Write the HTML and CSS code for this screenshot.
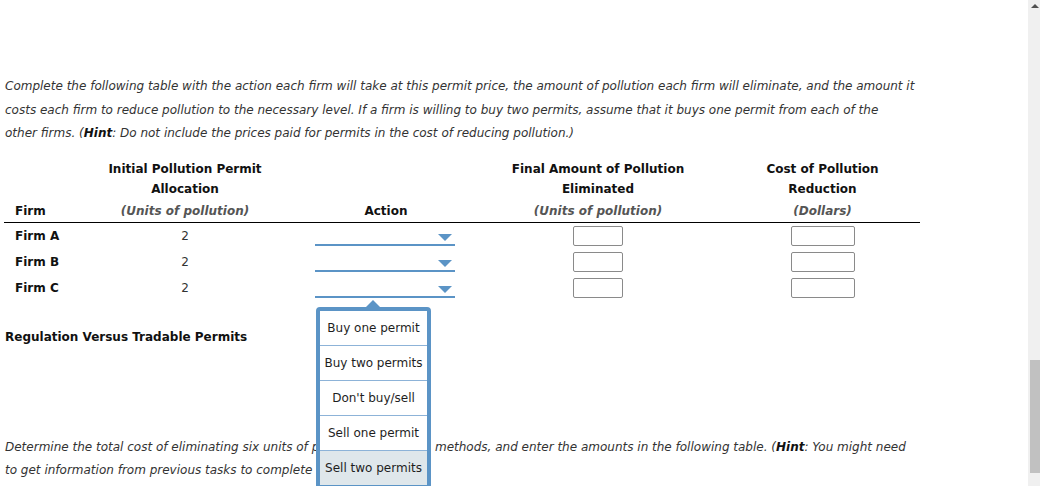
FILE: index.html
```html
<!DOCTYPE html>
<html lang="en">
<head>
    <meta charset="UTF-8" />
    <title>Tradable Permits</title>
    <link rel="stylesheet" href="styles.css">
</head>
<body>
    <div class="page">
        <div class="content">
            <p class="prompt">
                Complete the following table with the action each firm will take at this permit price, the amount of pollution each firm will eliminate, and the amount it<br>
                costs each firm to reduce pollution to the necessary level. If a firm is willing to buy two permits, assume that it buys one permit from each of the<br>
                other firms. (<strong>Hint</strong>: Do not include the prices paid for permits in the cost of reducing pollution.)
            </p>

            <div class="permit-table">
                <div class="th th-left">Firm</div>
                <div class="th">Initial Pollution Permit<br>Allocation<span class="unit">(Units of pollution)</span></div>
                <div class="th">Action</div>
                <div class="th">Final Amount of Pollution<br>Eliminated<span class="unit">(Units of pollution)</span></div>
                <div class="th th-cost">Cost of Pollution<br>Reduction<span class="unit">(Dollars)</span></div>

                <div class="td td-left">Firm A</div>
                <div class="td">2</div>
                <div class="td"><div class="dropdown"><span class="caret"></span></div></div>
                <div class="td"><input class="num-input" type="text"></div>
                <div class="td td-cost"><input class="num-input wide" type="text"></div>

                <div class="td td-left">Firm B</div>
                <div class="td">2</div>
                <div class="td"><div class="dropdown"><span class="caret"></span></div></div>
                <div class="td"><input class="num-input" type="text"></div>
                <div class="td td-cost"><input class="num-input wide" type="text"></div>

                <div class="td td-left">Firm C</div>
                <div class="td">2</div>
                <div class="td">
                    <div class="dropdown open">
                        <span class="caret"></span>
                        <ul class="menu">
                            <li>Buy one permit</li>
                            <li>Buy two permits</li>
                            <li>Don't buy/sell</li>
                            <li>Sell one permit</li>
                            <li class="active">Sell two permits</li>
                        </ul>
                    </div>
                </div>
                <div class="td"><input class="num-input" type="text"></div>
                <div class="td td-cost"><input class="num-input wide" type="text"></div>
            </div>

            <h3 class="section-title">Regulation Versus Tradable Permits</h3>

            <p class="prompt lower">
                Determine the total cost of eliminating six units of pollution using both methods, and enter the amounts in the following table. (<strong>Hint</strong>: You might need<br>
                to get information from previous tasks to complete this table.)
            </p>
        </div>

        <div class="scrollbar">
            <span class="scroll-up"></span>
            <span class="scroll-thumb"></span>
        </div>
    </div>
</body>
</html>
```

FILE: styles.css
```css
html, body {
    margin: 0;
    height: 486px;
    overflow: hidden;
    background: #fff;
}

body {
    font-family: "DejaVu Sans", Verdana, sans-serif;
    font-size: 12px;
    color: #222;
}

.page {
    display: flex;
    height: 486px;
}

.content {
    flex: 1;
    padding: 75px 0 0 5px;
}

.prompt {
    margin: 0;
    white-space: nowrap;
    font-style: italic;
    color: #333;
    line-height: 23.5px;
}

.prompt strong {
    color: #111;
}

.permit-table {
    display: grid;
    grid-template-columns: 101px 160px 242px 182px 231px;
    margin: 13px 0 0 -1px;
}

.th {
    display: flex;
    flex-direction: column;
    justify-content: flex-end;
    align-items: center;
    text-align: center;
    white-space: nowrap;
    font-weight: bold;
    line-height: 20px;
    padding-bottom: 1px;
    border-bottom: 1px solid #000;
    color: #111;
}

.th .unit {
    margin-top: 2px;
    font-style: italic;
    color: #555;
}

.th-left {
    align-items: flex-start;
    padding-left: 11px;
}

.th-cost, .td-cost {
    padding-left: 36px;
}

.td {
    height: 26px;
    display: flex;
    align-items: center;
    justify-content: center;
    color: #333;
}

.td-left {
    justify-content: flex-start;
    padding-left: 11px;
    font-weight: bold;
    color: #111;
}

.num-input {
    box-sizing: border-box;
    width: 50px;
    height: 20px;
    border: 1px solid #8a8a8a;
    border-radius: 2px;
    padding: 0;
}

.num-input.wide {
    width: 64px;
}

.dropdown {
    position: relative;
    box-sizing: border-box;
    width: 140px;
    height: 20px;
    margin-left: -2px;
    border-bottom: 2px solid #5b94c6;
    display: flex;
    justify-content: flex-end;
    align-items: flex-start;
}

.caret {
    margin: 8px 3px 0 0;
    width: 0;
    height: 0;
    border-left: 7.5px solid transparent;
    border-right: 7.5px solid transparent;
    border-top: 7px solid #5b94c6;
}

.menu {
    position: absolute;
    top: 29px;
    left: 1px;
    width: 107px;
    margin: 0;
    padding: 0;
    list-style: none;
    background: #fff;
    border: 4px solid #5b94c6;
    border-radius: 4px;
    z-index: 5;
}

.menu::before {
    content: "";
    position: absolute;
    top: -11px;
    left: 46px;
    border-left: 7px solid transparent;
    border-right: 7px solid transparent;
    border-bottom: 7px solid #5b94c6;
}

.menu li {
    height: 34px;
    line-height: 34px;
    text-align: center;
    color: #1e1e1e;
    border-bottom: 1px solid #8db3d8;
    white-space: nowrap;
}

.menu li:last-child {
    border-bottom: none;
}

.menu li.active {
    background: #dfe7eb;
}

.section-title {
    margin: 26px 0 0;
    font-size: 12px;
    line-height: 20px;
    color: #111;
}

.prompt.lower {
    margin-top: 89px;
}

.scrollbar {
    width: 12px;
    background: #f0f0f0;
    display: flex;
    flex-direction: column;
    align-items: flex-end;
}

.scroll-up {
    margin: 4px 1px 0 0;
    width: 0;
    height: 0;
    border-left: 4px solid transparent;
    border-right: 4px solid transparent;
    border-bottom: 4px solid #505050;
}

.scroll-thumb {
    margin-top: 352px;
    width: 10px;
    height: 113px;
    background: #c1c1c1;
}
```
